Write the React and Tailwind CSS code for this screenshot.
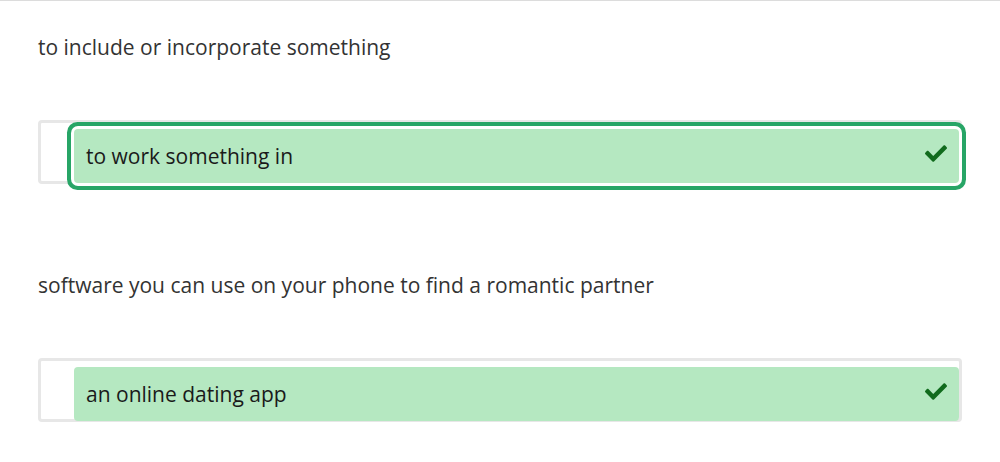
const items = [
  { prompt: 'to include or incorporate something', answer: 'to work something in', focused: true },
  { prompt: 'software you can use on your phone to find a romantic partner', answer: 'an online dating app', focused: false },
];

// font-awesome style check
const Check = () => (
  <svg width="22" height="17" viewBox="0 64 512 384" className="shrink-0 -mt-[5px]">
    <path
      fill="#116b1d"
      d="M173.898 439.404l-166.4-166.4c-9.997-9.997-9.997-26.206 0-36.204l36.203-36.204c9.997-9.998 26.207-9.998 36.204 0L192 312.69 432.095 72.596c9.997-9.997 26.207-9.997 36.204 0l36.203 36.204c9.997 9.997 9.997 26.206 0 36.204l-294.4 294.401c-9.998 9.997-26.207 9.997-36.204-.001z"
    />
  </svg>
);

const App = () => {
  return (
    <div
      className="min-h-[462px] bg-white border-t border-[#dcdcdc] px-[38px] pt-[31px] text-[21px]"
      style={{ fontFamily: '"Open Sans", "Noto Sans", sans-serif' }}
    >
      {items.map((item, i) => (
        <div key={i} className={i > 0 ? 'mt-[86px]' : ''}>
          <p className="leading-[30px] text-[#333333]">{item.prompt}</p>
          <div className="mt-[58px] w-[924px] border-[3px] border-[#e7e7e7] rounded-[4px] pl-[33px] pt-[6px]">
            <div
              className={`-mb-[2px] h-[54px] flex items-center justify-between pl-[12px] pr-[12px] bg-[#b5e8c1] rounded-[4px] text-[#1a1a1a] ${
                item.focused ? 'shadow-[0_0_0_3px_#ffffff,0_0_0_7px_#27a566]' : ''
              }`}
            >
              <span className="pt-[2px]">{item.answer}</span>
              <Check />
            </div>
          </div>
        </div>
      ))}
    </div>
  );
};

export default App;
